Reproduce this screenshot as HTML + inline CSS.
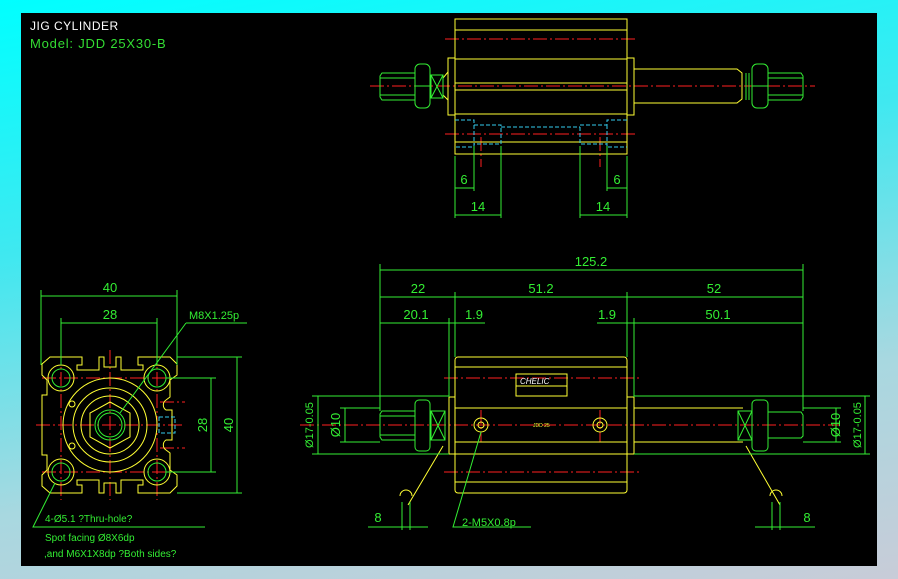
<!DOCTYPE html>
<html><head><style>
html,body{margin:0;padding:0;}
body{width:898px;height:579px;background:linear-gradient(170deg,#00ffff 0%,#40e8f0 35%,#a8d8e0 70%,#c8ccd8 100%);position:relative;overflow:hidden;}
svg{position:absolute;left:0;top:0;}
text{font-family:"Liberation Sans",sans-serif;}
</style></head><body>
<svg width="898" height="579" viewBox="0 0 898 579">
<rect x="21" y="13" width="856" height="553" fill="#000"/>
<text x="30" y="30" fill="#fff" font-size="12" letter-spacing="0.5">JIG CYLINDER</text>
<text x="30" y="48" fill="#33dd33" font-size="13" letter-spacing="0.8">Model:  JDD  25X30-B</text>

<g fill="none" stroke-width="1">
<!-- TOP VIEW -->
<g stroke="#ff2020" stroke-dasharray="14,3,2,3">
<line x1="370" y1="86" x2="815" y2="86"/>
<line x1="445" y1="39" x2="638" y2="39"/>
<line x1="445" y1="134" x2="638" y2="134"/>
<line x1="481" y1="137" x2="481" y2="167"/>
<line x1="600" y1="137" x2="600" y2="167"/>
</g>
<g stroke="#ffff33">
<rect x="455" y="19" width="172" height="135"/>
<line x1="455" y1="30" x2="627" y2="30"/>
<line x1="455" y1="59" x2="627" y2="59"/>
<line x1="455" y1="83" x2="627" y2="83"/>
<line x1="455" y1="90" x2="627" y2="90"/>
<line x1="455" y1="114" x2="627" y2="114"/>
<line x1="455" y1="142" x2="627" y2="142"/>
<rect x="448" y="58" width="7" height="57"/>
<rect x="627" y="58" width="7" height="57"/>
<path d="M634 69 H737 L742 73 V99 L737 103 H634"/>
<path d="M448 72 L443 78 V95 L448 100"/>
</g>
<g stroke="#33ee33">
<path d="M382 73 H415 V100 H382 L380 97 V76 Z"/>
<line x1="380" y1="78" x2="415" y2="78"/><line x1="380" y1="95" x2="415" y2="95"/>
<rect x="415" y="64" width="15" height="44" rx="5"/>
<line x1="415" y1="86" x2="430" y2="86"/>
<rect x="431" y="75" width="12" height="23"/>
<path d="M431 75 L443 98 M443 75 L431 98"/>
<rect x="752" y="64" width="16" height="44" rx="5"/>
<line x1="752" y1="86" x2="768" y2="86"/>
<path d="M768 73 H801 L803 76 V97 L801 100 H768"/>
<line x1="768" y1="78" x2="803" y2="78"/><line x1="768" y1="95" x2="803" y2="95"/>
<line x1="746" y1="73" x2="746" y2="100"/><line x1="749" y1="73" x2="749" y2="100"/>
</g>
<g stroke="#33ccee" stroke-dasharray="4,2">
<path d="M455 120 H474 V125 H501 V144 H474 V147 H455"/>
<line x1="474" y1="125" x2="474" y2="147"/>
<path d="M627 120 H607 V125 H580 V144 H607 V147 H627"/>
<line x1="607" y1="125" x2="607" y2="147"/>
<line x1="501" y1="127" x2="580" y2="127"/>
</g>
<g stroke="#33ee33">
<line x1="455" y1="156" x2="455" y2="218"/>
<line x1="474" y1="146" x2="474" y2="191"/>
<line x1="501" y1="146" x2="501" y2="218"/>
<line x1="580" y1="146" x2="580" y2="218"/>
<line x1="607" y1="146" x2="607" y2="191"/>
<line x1="627" y1="156" x2="627" y2="218"/>
<line x1="455" y1="188" x2="474" y2="188"/>
<line x1="607" y1="188" x2="627" y2="188"/>
<line x1="455" y1="215" x2="501" y2="215"/>
<line x1="580" y1="215" x2="627" y2="215"/>
</g>

<!-- LEFT VIEW -->
<g stroke="#ff2020" stroke-dasharray="14,3,2,3">
<line x1="36" y1="425" x2="185" y2="425"/>
<line x1="110" y1="350" x2="110" y2="500"/>
<line x1="42" y1="378" x2="190" y2="378"/>
<line x1="42" y1="472" x2="190" y2="472"/>
<line x1="61" y1="350" x2="61" y2="500"/>
<line x1="157" y1="350" x2="157" y2="500"/>
<line x1="160" y1="402" x2="185" y2="402"/>
<line x1="160" y1="448" x2="185" y2="448"/>
</g>
<g stroke="#ffff33">
<path d="M50 357 H82 V365 H77 V370 H99 V357 H104 V367 H116 V357 H121 V370 H143 V365 H138 V357 H170 L177 364 V375 L170 380 V397 L166 400 A6 6 0 0 0 166 410 L172 410 V440 L166 440 A6 6 0 0 0 166 450 L170 453 V470 L177 475 V486 L170 493 H138 V485 H143 V480 H121 V493 H116 V483 H104 V493 H99 V480 H77 V485 H82 V493 H50 L42 486 V475 L47 470 V455 H42 V395 H47 V380 L42 375 V364 Z"/>
<circle cx="61" cy="378" r="13"/><circle cx="157" cy="378" r="13"/>
<circle cx="61" cy="472" r="13"/><circle cx="157" cy="472" r="13"/>
<circle cx="110" cy="425" r="47"/>
<circle cx="110" cy="425" r="37"/>
<circle cx="110" cy="425" r="29"/>
<path d="M110 402 L130 413 V437 L110 448 L90 437 V413 Z"/>
<circle cx="72" cy="404" r="3"/><circle cx="72" cy="446" r="3"/>
</g>
<g stroke="#33ee33">
<circle cx="61" cy="378" r="9"/><circle cx="157" cy="378" r="9"/>
<circle cx="61" cy="472" r="9"/><circle cx="157" cy="472" r="9"/>
<circle cx="110" cy="425" r="15"/><circle cx="110" cy="425" r="12"/>
</g>
<rect x="159" y="417" width="16" height="16" stroke="#33ccee" stroke-dasharray="4,2"/>
<g stroke="#33ee33">
<line x1="41" y1="296" x2="177" y2="296"/>
<line x1="41" y1="290" x2="41" y2="365"/><line x1="177" y1="290" x2="177" y2="365"/>
<line x1="61" y1="323" x2="157" y2="323"/>
<line x1="61" y1="318" x2="61" y2="365"/><line x1="157" y1="318" x2="157" y2="365"/>
<line x1="211" y1="378" x2="211" y2="472"/>
<line x1="166" y1="378" x2="216" y2="378"/><line x1="166" y1="472" x2="216" y2="472"/>
<line x1="237" y1="357" x2="237" y2="493"/>
<line x1="177" y1="357" x2="242" y2="357"/><line x1="177" y1="493" x2="242" y2="493"/>
<path d="M186 323 H247 M186 323 L120 413"/>
<path d="M55 483 L33 527 H205"/>
</g>
<g fill="#33ee33" font-size="13" stroke="none" text-anchor="middle">
<text x="110" y="292">40</text>
<text x="110" y="319">28</text>
<text x="207" y="425" transform="rotate(-90 207 425)">28</text>
<text x="233" y="425" transform="rotate(-90 233 425)">40</text>
</g>
<g fill="#33ee33" font-size="11" stroke="none">
<text x="189" y="319">M8X1.25p</text>
<text x="45" y="522" font-size="10">4-Ø5.1 ?Thru-hole?</text>
<text x="45" y="541" font-size="10">Spot facing  Ø8X6dp</text>
<text x="44" y="557" font-size="10">,and  M6X1X8dp ?Both sides?</text>
</g>

<!-- SIDE VIEW -->
<g stroke="#ff2020" stroke-dasharray="14,3,2,3">
<line x1="300" y1="425" x2="840" y2="425"/>
<line x1="444" y1="378" x2="640" y2="378"/>
<line x1="444" y1="472" x2="640" y2="472"/>
<line x1="481" y1="410" x2="481" y2="442"/>
<line x1="600" y1="410" x2="600" y2="442"/>
</g>
<g stroke="#ffff33">
<rect x="455" y="357" width="172" height="136" rx="3"/>
<line x1="455" y1="367" x2="627" y2="367"/>
<line x1="455" y1="408" x2="627" y2="408"/>
<line x1="455" y1="442" x2="627" y2="442"/>
<line x1="455" y1="454" x2="627" y2="454"/>
<line x1="455" y1="482" x2="627" y2="482"/>
<rect x="449" y="397" width="6" height="57"/>
<rect x="627" y="397" width="7" height="57"/>
<path d="M634 408 H743 M634 442 H743"/>
<circle cx="481" cy="425" r="7"/><circle cx="600" cy="425" r="7"/>
<circle cx="481" cy="425" r="3"/><circle cx="600" cy="425" r="3"/>
<rect x="516" y="374" width="51" height="22"/>
<line x1="516" y1="386" x2="567" y2="386"/>
<path d="M443 446 L408 505 M746 446 L780 505"/>
<path d="M400 496 A6 6 0 1 1 412 496 M770 496 A6 6 0 1 1 782 496"/>
</g>
<text x="520" y="384" fill="#fff" font-size="8" font-style="italic" stroke="none">CHELIC</text>
<text x="533" y="427" fill="#ffff33" font-size="5" stroke="none">JDD 25</text>
<g stroke="#33ee33">
<path d="M382 411 H415 V440 H382 L380 437 V414 Z"/>
<line x1="380" y1="416" x2="415" y2="416"/><line x1="380" y1="435" x2="415" y2="435"/>
<rect x="415" y="400" width="15" height="51" rx="4"/>
<rect x="431" y="411" width="14" height="29"/>
<path d="M431 411 L445 440 M445 411 L431 440"/>
<rect x="752" y="400" width="16" height="51" rx="4"/>
<path d="M768 412 H801 L803 415 V436 L801 438 H768"/>
<rect x="738" y="411" width="14" height="29"/>
<path d="M738 411 L752 440 M752 411 L738 440"/>
<!-- dims -->
<line x1="380" y1="270" x2="803" y2="270"/>
<line x1="380" y1="264" x2="380" y2="411"/><line x1="803" y1="264" x2="803" y2="411"/>
<line x1="380" y1="297" x2="803" y2="297"/>
<line x1="455" y1="292" x2="455" y2="357"/><line x1="627" y1="292" x2="627" y2="357"/>
<line x1="449" y1="318" x2="449" y2="397"/><line x1="634" y1="318" x2="634" y2="397"/>
<line x1="380" y1="323" x2="485" y2="323"/>
<line x1="597" y1="323" x2="803" y2="323"/>
<line x1="318" y1="396" x2="318" y2="454"/>
<line x1="312" y1="396" x2="449" y2="396"/><line x1="312" y1="454" x2="449" y2="454"/>
<line x1="345" y1="408" x2="345" y2="442"/>
<line x1="340" y1="408" x2="380" y2="408"/><line x1="340" y1="442" x2="380" y2="442"/>
<line x1="836" y1="408" x2="836" y2="442"/>
<line x1="803" y1="408" x2="841" y2="408"/><line x1="803" y1="442" x2="841" y2="442"/>
<line x1="865" y1="396" x2="865" y2="454"/>
<line x1="634" y1="396" x2="870" y2="396"/><line x1="634" y1="454" x2="870" y2="454"/>
<path d="M481 432 L453 527 H531"/>
<line x1="402" y1="502" x2="402" y2="530"/><line x1="410" y1="502" x2="410" y2="530"/>
<line x1="368" y1="527" x2="428" y2="527"/>
<line x1="772" y1="502" x2="772" y2="530"/><line x1="780" y1="502" x2="780" y2="530"/>
<line x1="755" y1="527" x2="815" y2="527"/>
</g>
<g fill="#33ee33" font-size="13" stroke="none" text-anchor="middle">
<text x="591" y="266">125.2</text>
<text x="418" y="293">22</text>
<text x="541" y="293">51.2</text>
<text x="714" y="293">52</text>
<text x="416" y="319">20.1</text>
<text x="474" y="319">1.9</text>
<text x="607" y="319">1.9</text>
<text x="718" y="319">50.1</text>
<text x="464" y="184">6</text>
<text x="478" y="211">14</text>
<text x="617" y="184">6</text>
<text x="603" y="211">14</text>
<text x="378" y="522">8</text>
<text x="807" y="522">8</text>
<text x="340" y="425" transform="rotate(-90 340 425)">Ø10</text>
<text x="313" y="425" transform="rotate(-90 313 425)" font-size="11">Ø17-0.05</text>
<text x="840" y="425" transform="rotate(-90 840 425)">Ø10</text>
<text x="861" y="425" transform="rotate(-90 861 425)" font-size="11">Ø17-0.05</text>
</g>
<text x="462" y="526" fill="#33ee33" font-size="11" stroke="none">2-M5X0.8p</text>
</g>
</svg>
</body></html>
